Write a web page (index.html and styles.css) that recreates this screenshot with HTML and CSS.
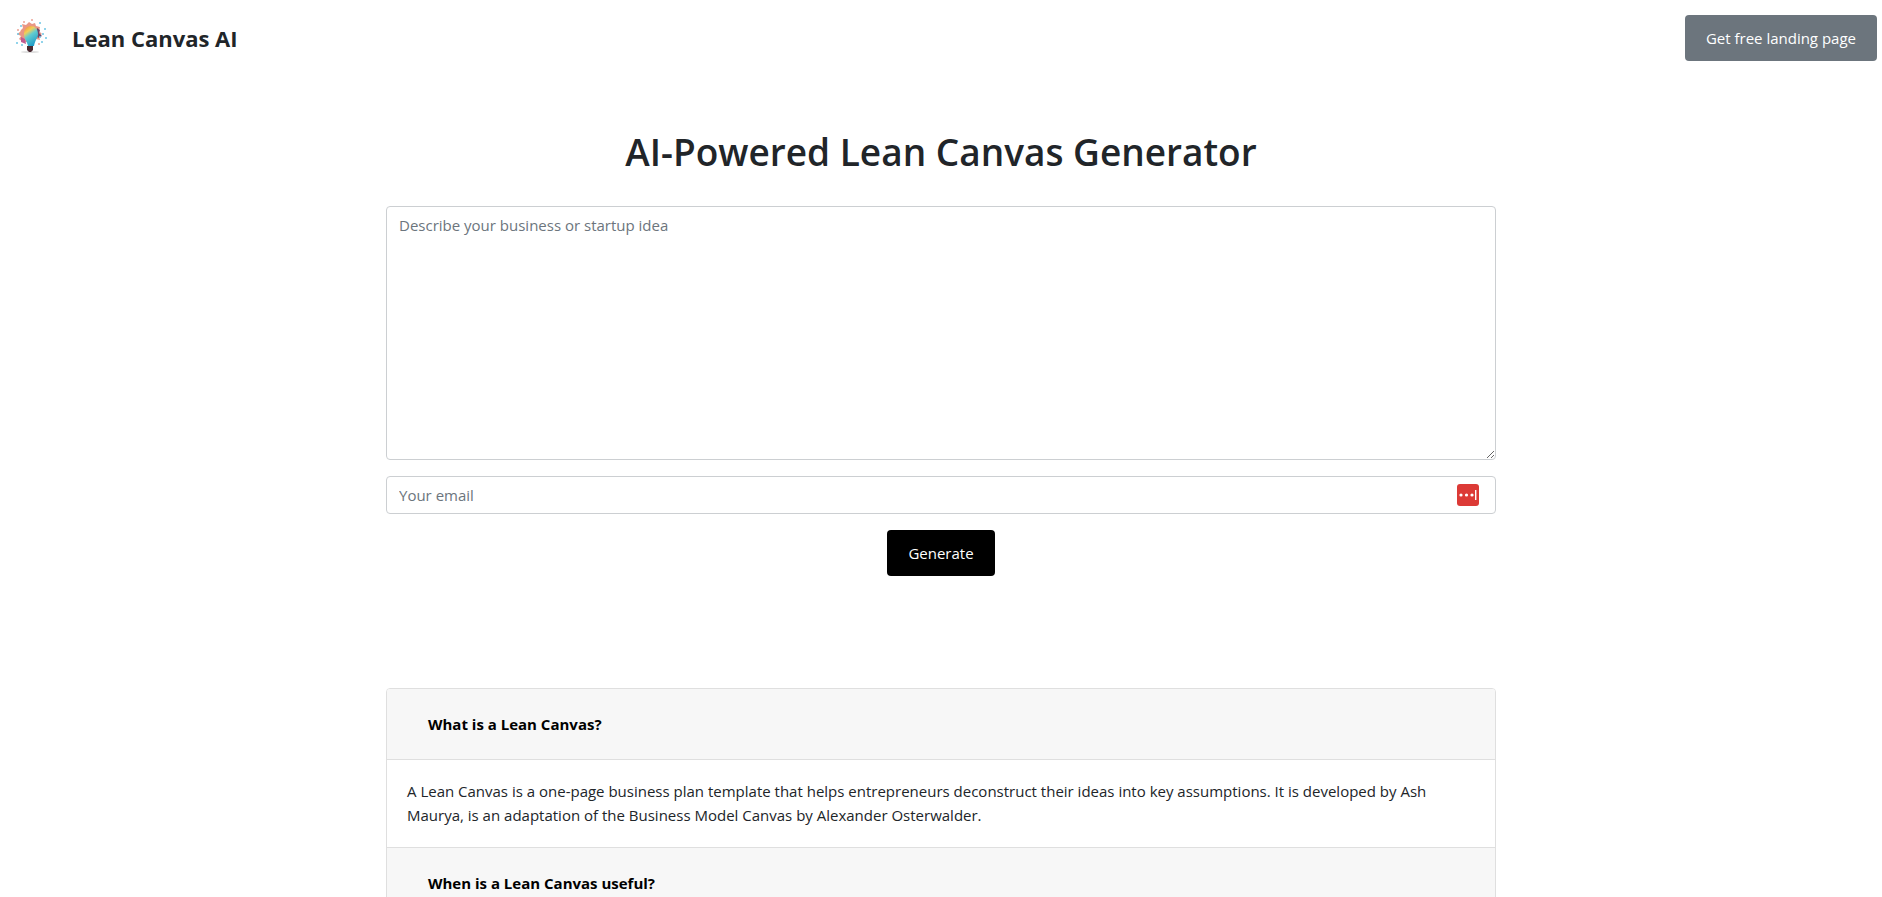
FILE: index.html
```html
<!DOCTYPE html>
<html lang="en">
<head>
    <meta charset="UTF-8">
    <meta name="viewport" content="width=device-width, initial-scale=1.0">
    <title>Lean Canvas AI</title>
    <link rel="stylesheet" href="styles.css">
</head>
<body>
    <nav class="navbar">
        <a class="brand" href="#">
            <svg class="logo" viewBox="0 0 50 50" aria-hidden="true">
                <defs>
                    <linearGradient id="bulb" x1="0.1" y1="0" x2="0.6" y2="1">
                        <stop offset="0" stop-color="#f08a3c"/>
                        <stop offset="0.28" stop-color="#f3cf58"/>
                        <stop offset="0.5" stop-color="#62cbd0"/>
                        <stop offset="1" stop-color="#1f9cc8"/>
                    </linearGradient>
                </defs>
                <ellipse cx="24" cy="39" rx="9" ry="1" fill="#dedede"/>
                <path d="M15 17l2-2-1-4 4 1 3-3 3 2 3-1 1 3 4 1-1 4 3 3-3 2 1 4-4-1-2 3-11 0-4-3 2-3-4-2 3-2z" fill="#e2745c" opacity="0.75"/>
                <path d="M31 15l3 2-1 3 3 3-4 2-2-4z" fill="#6c4468"/>
                <path d="M15 24l4 2 1 5-5-2z" fill="#c05a90"/>
                <path d="M25 13c-5 0-7 4-7 8 0 5 3 7 4 12h6c1-6 4-8 4-12 0-5-3-8-7-8z" fill="url(#bulb)"/>
                <path d="M21 33h6v4l-2 2h-2l-2-2z" fill="#4a2b32"/>
                <g fill="#6cc6e4">
                    <circle cx="39" cy="16" r="1"/><circle cx="37" cy="21" r="1"/>
                    <circle cx="40" cy="25" r="1"/><circle cx="36" cy="29" r="1"/>
                    <circle cx="34" cy="10" r="1"/><circle cx="12" cy="21" r="1"/>
                    <circle cx="11" cy="30" r="1"/><circle cx="16" cy="32" r="1"/>
                    <circle cx="34" cy="24" r="1"/><circle cx="15" cy="13" r="1"/>
                </g>
                <g fill="#eda294">
                    <circle cx="26" cy="7" r="1"/><circle cx="18" cy="9" r="1"/>
                    <circle cx="12" cy="17" r="1"/><circle cx="33" cy="31" r="1"/>
                </g>
            </svg>
            <span>Lean Canvas AI</span>
        </a>
        <button class="btn btn-secondary" type="button">Get free landing page</button>
    </nav>

    <main class="container">
        <h1>AI-Powered Lean Canvas Generator</h1>
        <form class="idea-form">
            <textarea class="form-control" rows="10" aria-label="Business idea" placeholder="Describe your business or startup idea"></textarea>
            <div class="email-field">
                <input class="form-control" type="email" aria-label="Email" placeholder="Your email">
                <svg class="email-icon" viewBox="0 0 22 22" aria-hidden="true">
                    <rect width="22" height="22" rx="3" fill="#dc3a36"/>
                    <circle cx="4" cy="11" r="1.6" fill="#fff"/>
                    <circle cx="9.5" cy="11" r="1.6" fill="#fff"/>
                    <circle cx="15" cy="11" r="1.6" fill="#fff"/>
                    <rect x="18" y="6" width="1.4" height="10" fill="#fff"/>
                </svg>
            </div>
            <button class="btn btn-dark" type="button">Generate</button>
        </form>

        <section class="accordion">
            <h2 class="card-header"><button type="button">What is a Lean Canvas?</button></h2>
            <div class="card-body">
                A Lean Canvas is a one-page business plan template that helps entrepreneurs deconstruct their ideas into key assumptions. It is developed by Ash Maurya, is an adaptation of the Business Model Canvas by Alexander Osterwalder.
            </div>
            <h2 class="card-header"><button type="button">When is a Lean Canvas useful?</button></h2>
        </section>
    </main>
</body>
</html>
```

FILE: styles.css
```css
* {
    box-sizing: border-box;
}

body {
    margin: 0;
    font-family: "Segoe UI", "Open Sans", "Noto Sans", sans-serif;
    font-size: 15px;
    line-height: 24px;
    color: #212529;
    background-color: #fff;
    overflow: hidden;
}

button,
input,
textarea {
    font: inherit;
}

.navbar {
    display: flex;
    justify-content: space-between;
    align-items: center;
    padding: 13px 5px 12px 6px;
}

.brand {
    display: flex;
    align-items: center;
    gap: 16px;
    color: #212529;
    font-size: 22px;
    font-weight: 700;
    text-decoration: none;
}

.logo {
    width: 50px;
    height: 50px;
}

.btn {
    padding: 10px 20px;
    border: 1px solid transparent;
    border-radius: 4px;
    color: #fff;
    cursor: pointer;
}

.btn-secondary {
    background-color: #6c757d;
}

.btn-dark {
    background-color: #000;
}

.container {
    max-width: 1140px;
    margin: 0 auto;
    padding: 0 15px;
}

h1 {
    margin: 53px 0 30px;
    font-size: 37px;
    font-weight: 600;
    line-height: 48px;
    text-align: center;
}

.idea-form {
    display: flex;
    flex-direction: column;
    align-items: center;
    gap: 16px;
}

.form-control {
    display: block;
    width: 100%;
    padding: 6px 12px;
    border: 1px solid #cccfd2;
    border-radius: 4px;
    color: #495057;
}

.form-control::placeholder {
    color: #6c757d;
}

.email-field {
    position: relative;
    width: 100%;
}

.email-icon {
    position: absolute;
    top: 8px;
    right: 17px;
    width: 22px;
    height: 22px;
}

.accordion {
    margin-top: 112px;
    border: 1px solid #dfdfdf;
    border-radius: 4px;
    overflow: hidden;
}

.card-header {
    margin: 0;
    padding: 12px 20px;
    font-size: 15px;
    background-color: #f7f7f7;
    border-bottom: 1px solid #dfdfdf;
}

.card-header button {
    display: block;
    padding: 11px 21px;
    border: none;
    background: none;
    color: #000;
    font-weight: 700;
    cursor: pointer;
}

.card-body {
    padding: 19px 20px 20px;
    border-bottom: 1px solid #dfdfdf;
}
```
